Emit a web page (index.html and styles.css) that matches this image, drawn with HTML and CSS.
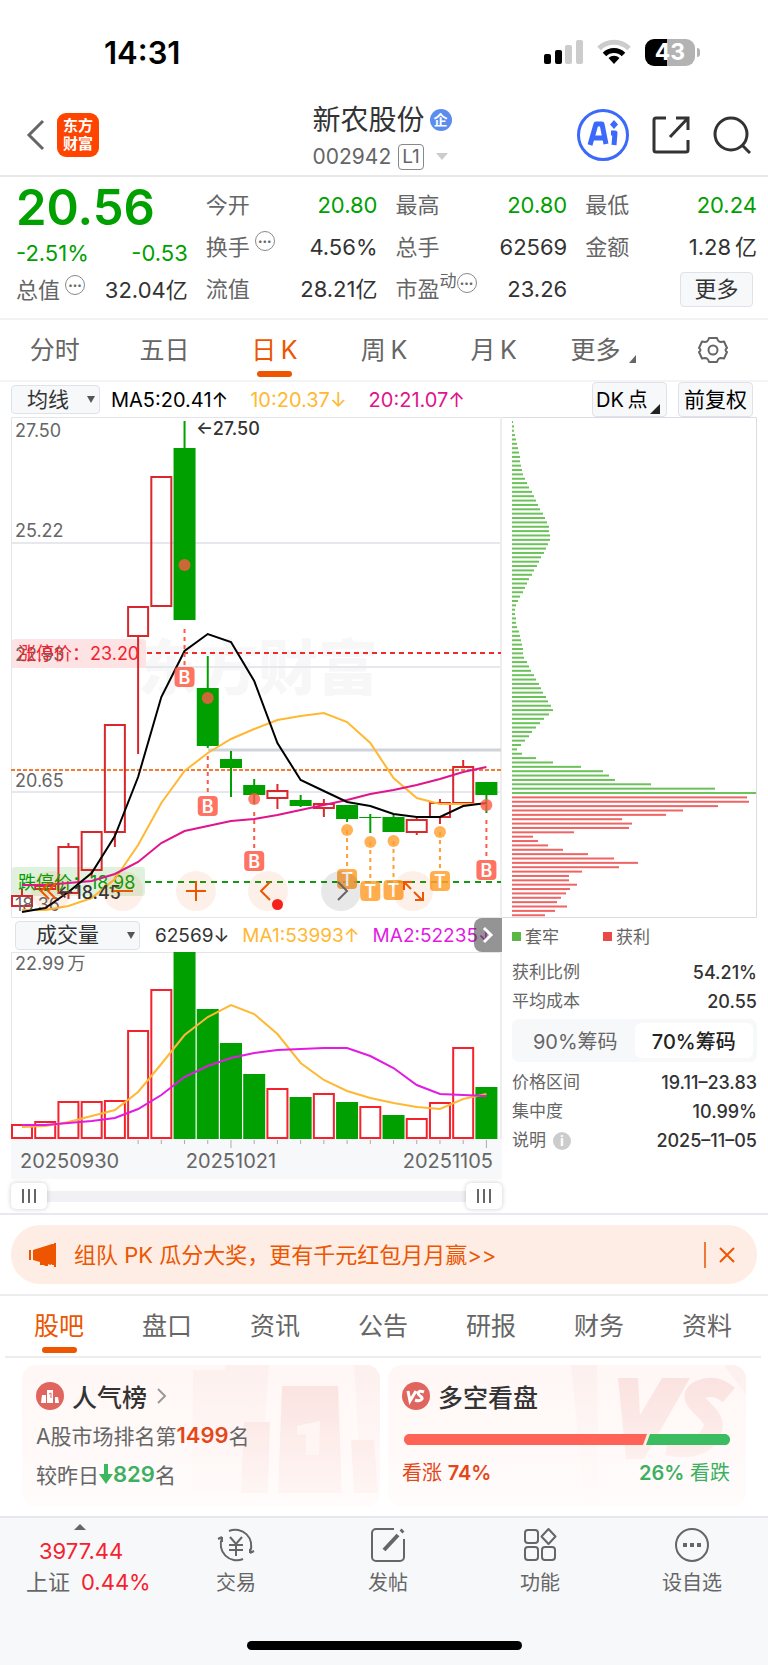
FILE: index.html
```html
<!DOCTYPE html>
<html lang="zh-CN">
<head>
    <meta charset="UTF-8">
    <meta name="viewport" content="width=device-width, initial-scale=1.0">
    <title>新农股份 002942</title>
    <link rel="stylesheet" href="styles.css">
</head>
<body>
    <!-- Status bar -->
    <div class="status-bar">
        <span class="time">14:31</span>
        <div class="status-icons">
            <svg width="39" height="26" viewBox="0 0 39 26">
                <rect x="0" y="15" width="7" height="10" rx="2"/>
                <rect x="11" y="11" width="7" height="14" rx="2"/>
                <rect x="21" y="6" width="7" height="19" rx="2" fill="#ccc"/>
                <rect x="32" y="1" width="7" height="24" rx="2" fill="#ccc"/>
            </svg>
            <svg width="34" height="26" viewBox="0 0 34 26" fill="none" stroke-width="5">
                <path d="M2 9.500A21 21 0 0 1 32 9.500" stroke="#ccc"/>
                <path d="M7.500 15.500A13.500 13.500 0 0 1 26.500 15.500" stroke="#000"/>
                <path d="M17 25l-5.500-6a8 8 0 0 1 11 0z" fill="#000"/>
            </svg>
            <div class="battery"><span>43</span></div>
        </div>
    </div>

    <!-- Title bar -->
    <header class="nav">
        <div class="nav-left">
            <button class="icon-btn" aria-label="返回">
                <svg width="20" height="32" viewBox="0 0 20 32" fill="none" stroke="#666" stroke-width="3"><path d="M17 2L3 16l14 14"/></svg>
            </button>
            <a class="logo" href="#">东方<br>财富</a>
        </div>
        <div class="nav-title">
            <h1>新农股份<span class="badge">企</span></h1>
            <p>002942<span class="level">L1</span><span class="caret"></span></p>
        </div>
        <div class="nav-right">
            <button class="icon-btn" aria-label="AI">
                <svg width="52" height="52" viewBox="0 0 52 52">
                    <circle cx="26" cy="26" r="24.500" fill="#fff" stroke="#3b69fa" stroke-width="3"/>
                    <path d="M13 36L19 15h6l4 20" fill="none" stroke="#3b69fa" stroke-width="5" stroke-linejoin="round"/>
                    <path d="M15 29h11" stroke="#3b69fa" stroke-width="5"/>
                    <path d="M34 24h4l-1 12" fill="none" stroke="#3b69fa" stroke-width="5" stroke-linejoin="round"/>
                    <path d="M37 11l4 4.500-4 4.500-4-4.500z" fill="#3b69fa"/>
                </svg>
            </button>
            <button class="icon-btn" aria-label="分享">
                <svg width="38" height="38" viewBox="0 0 38 38" fill="none" stroke="#333" stroke-width="3">
                    <path d="M14 2H4a2 2 0 0 0-2 2v30a2 2 0 0 0 2 2h30a2 2 0 0 0 2-2V24"/>
                    <path d="M24 2h12v12M36 2L18 21"/>
                </svg>
            </button>
            <button class="icon-btn" aria-label="搜索">
                <svg width="38" height="38" viewBox="0 0 38 38" fill="none" stroke="#333" stroke-width="3"><circle cx="18" cy="18" r="16"/><path d="M29 29l8 8"/></svg>
            </button>
        </div>
    </header>

    <!-- Quote summary -->
    <section class="quote">
        <div class="quote-col">
            <strong class="price">20.56</strong>
            <div class="pair down"><span>-2.51%</span><span>-0.53</span></div>
            <div class="pair"><span class="name">总值<i class="more-dot">•••</i></span><span>32.04亿</span></div>
        </div>
        <div class="quote-col">
            <div class="pair"><span class="name">今开</span><span class="down">20.80</span></div>
            <div class="pair"><span class="name">换手<i class="more-dot">•••</i></span><span>4.56%</span></div>
            <div class="pair"><span class="name">流值</span><span>28.21亿</span></div>
        </div>
        <div class="quote-col">
            <div class="pair"><span class="name">最高</span><span class="down">20.80</span></div>
            <div class="pair"><span class="name">总手</span><span>62569</span></div>
            <div class="pair"><span class="name">市盈<sup>动</sup><i class="more-dot">•••</i></span><span>23.26</span></div>
        </div>
        <div class="quote-col">
            <div class="pair"><span class="name">最低</span><span class="down">20.24</span></div>
            <div class="pair"><span class="name">金额</span><span>1.28&thinsp;亿</span></div>
            <div class="pair end"><button class="box-btn">更多</button></div>
        </div>
    </section>

    <!-- Period tabs -->
    <nav class="tabs period-tabs">
        <a href="#">分时</a>
        <a href="#">五日</a>
        <a href="#" class="active">日&thinsp;K</a>
        <a href="#">周&thinsp;K</a>
        <a href="#">月&thinsp;K</a>
        <a href="#">更多<i class="corner"></i></a>
        <button class="icon-btn" aria-label="设置">
            <svg width="30" height="28" viewBox="0 0 30 28" fill="none" stroke="#666" stroke-width="2">
                <path d="M11 2h8q1 4 4 4l3-.5 3 6.500q-3 2 0 4l-3 6.500-3-.5q-3 0-4 4h-8q-1-4-4-4l-3 .5L1 16q3-2 0-4l3-6.500L7 6q3 0 4-4z" stroke-linejoin="round"/>
                <circle cx="15" cy="14" r="4.500"/>
            </svg>
        </button>
    </nav>

    <!-- Indicator toolbar -->
    <div class="toolbar">
        <div class="select-box ma-select">
            <select aria-label="主图指标"><option>均线</option></select>
        </div>
        <span>MA5:20.41↑</span>
        <span class="c-orange">10:20.37↓</span>
        <span class="c-pink">20:21.07↑</span>
        <div class="toolbar-btns">
            <button class="box-btn dk">DK&thinsp;点<i class="corner"></i></button>
            <button class="box-btn">前复权</button>
        </div>
    </div>

    <main class="charts">
        <div class="left">
            <div class="k-chart">
                <svg id="kChart" viewBox="0 0 491 501"></svg>
                <div class="k-tools">
                    <button aria-label="后退"><svg viewBox="0 0 40 40"><path d="M18 12l-8 8 8 8M25 12l-8 8 8 8"/></svg></button>
                    <button aria-label="缩小"><svg viewBox="0 0 40 40"><path d="M10 20h20"/></svg></button>
                    <button aria-label="放大"><svg viewBox="0 0 40 40"><path d="M10 20h20M20 10v20"/></svg></button>
                    <button class="dot" aria-label="左移"><svg viewBox="0 0 40 40"><path d="M22 11l-9 9 9 9"/></svg></button>
                    <button class="grey" aria-label="右移"><svg viewBox="0 0 40 40"><path d="M17 11l9 9-9 9"/></svg></button>
                    <button aria-label="全屏"><svg viewBox="0 0 40 40"><path d="M11 19v-8h8M11 11l7 7M30 21v8h-8M29 29l-8-8"/></svg></button>
                </div>
            </div>
            <div class="vol-bar">
                <div class="select-box vol-select">
                    <select aria-label="副图指标"><option>成交量</option></select>
                </div>
                <span>62569↓</span>
                <span class="c-orange">MA1:53993↑</span>
                <span class="c-magenta">MA2:52235↓</span>
                <button class="expand" aria-label="展开"><svg width="12" height="18" viewBox="0 0 12 18"><path d="M2 2l7 7-7 7" fill="none" stroke="#fff" stroke-width="3"/></svg></button>
            </div>
            <svg id="volChart" viewBox="0 0 491 227"></svg>
            <div class="range">
                <input type="range" min="0" max="100" value="0" aria-label="起始">
                <input type="range" min="0" max="100" value="100" aria-label="结束">
            </div>
        </div>
        <div class="right">
            <svg id="chipChart" viewBox="0 0 255 501"></svg>
            <div class="chips">
                <div class="legend"><span><i class="sq green"></i>套牢</span><span><i class="sq red"></i>获利</span></div>
                <dl>
                    <div><dt>获利比例</dt><dd>54.21%</dd></div>
                    <div><dt>平均成本</dt><dd>20.55</dd></div>
                </dl>
                <div class="segment">
                    <button>90%筹码</button>
                    <button class="on">70%筹码</button>
                </div>
                <dl>
                    <div><dt>价格区间</dt><dd>19.11–23.83</dd></div>
                    <div><dt>集中度</dt><dd>10.99%</dd></div>
                    <div><dt>说明<i class="info">i</i></dt><dd>2025–11–05</dd></div>
                </dl>
            </div>
        </div>
    </main>

    <!-- Promo banner -->
    <div class="banner-wrap">
        <div class="banner">
            <svg width="28" height="24" viewBox="0 0 28 24" fill="#ed5500"><path d="M1 7h2v10H1zM5 7L24 1h2V0h2v24h-2v-2h-2v-1l-2 1-2-1v2h-3l-1-1h-4v-3L5 17z"/></svg>
            <a href="#">组队 PK 瓜分大奖，更有千元红包月月赢&gt;&gt;</a>
            <button class="icon-btn close" aria-label="关闭">
                <svg width="16" height="16" viewBox="0 0 16 16" fill="none" stroke="#ed5500" stroke-width="2"><path d="M1 1l14 14M15 1L1 15"/></svg>
            </button>
        </div>
    </div>

    <nav class="tabs info-tabs">
        <a href="#" class="active">股吧</a>
        <a href="#">盘口</a>
        <a href="#">资讯</a>
        <a href="#">公告</a>
        <a href="#">研报</a>
        <a href="#">财务</a>
        <a href="#">资料</a>
    </nav>

    <section class="cards">
        <article class="card">
            <svg class="card-bg" width="190" height="142" viewBox="0 0 190 142">
                <defs>
                    <linearGradient id="fade" x1="0" y1="0" x2="0" y2="142" gradientUnits="userSpaceOnUse">
                        <stop offset="0" stop-color="#fae0de"/>
                        <stop offset="1" stop-color="#fff8f6"/>
                    </linearGradient>
                    <linearGradient id="wash" x1="0" y1="0" x2="0" y2="142" gradientUnits="userSpaceOnUse">
                        <stop offset="0" stop-color="#fdf0ee"/>
                        <stop offset="1" stop-color="#fffcfb"/>
                    </linearGradient>
                </defs>
                <path d="M3 5h32V0h44l-4 57H54v72H2z" fill="url(#wash)"/>
                <path d="M164 0h26v142h-18z" fill="url(#wash)"/>
                <path d="M92 21h56l4 107H88zM54 57h26l-2 71H51zM161 75h23l4 53h-24z" fill="url(#fade)"/>
                <path d="M107 61l23-5-1 34h-13V69l-9 1z" fill="#fff6f4"/>
            </svg>
            <h2>
                <svg width="28" height="28" viewBox="0 0 28 28"><circle cx="14" cy="14" r="14" fill="#e0655f"/><path d="M6 13h4v8H5zM11 8h6v13h-6zM19 15h3l1 6h-4z" fill="#fff"/><path d="M13 12l2-1v5" fill="none" stroke="#e0605a"/></svg>
                人气榜
                <svg class="arrow" width="10" height="16" viewBox="0 0 10 16" fill="none" stroke="#999" stroke-width="2"><path d="M1 1l7 7-7 7"/></svg>
            </h2>
            <p>A股市场排名第<b class="up">1499</b>名</p>
            <p>较昨日<svg width="14" height="20" viewBox="0 0 14 20" fill="#3cb95f"><path d="M5 0h4v10h5l-7 10-7-10h5z"/></svg><b class="fall">829</b>名</p>
        </article>
        <article class="card">
            <svg class="card-bg" width="190" height="142" viewBox="0 0 190 142">
                <path d="M15 0h26l2 142H29zM168 0h22v30z" fill="url(#wash)"/>
                <path d="M62 13h20l2 37 22-37h28L88 94H70z" fill="url(#fade)"/>
                <path d="M173 30q-14-12-30-5c-18 10 18 22 14 38q-8 26-46 18" fill="none" stroke="url(#fade)" stroke-width="19"/>
            </svg>
            <h2>
                <svg width="28" height="28" viewBox="0 0 28 28"><circle cx="14" cy="14" r="14" fill="#e0655f"/><path d="M6 9l2 10 6-10M22 10q-5-2-6 1c0 3 5 3 4 6q-2 3-7 1" fill="none" stroke="#fff" stroke-width="3"/></svg>
                多空看盘
            </h2>
            <div class="vote-bar"><span class="bull" style="width:74%"></span><span class="bear"></span></div>
            <div class="vote-text"><span class="up">看涨 <b>74%</b></span><span class="fall"><b>26%</b> 看跌</span></div>
        </article>
    </section>

    <!-- Bottom bar -->
    <footer class="bottom">
        <div class="bottom-items">
            <a href="#" class="index">
                <i class="tri-up"></i>
                <span class="red-text value">3977.44</span>
                <span>上证&ensp;<span class="red-text">0.44%</span></span>
            </a>
            <a href="#">
                <svg width="40" height="36" viewBox="0 0 40 36" fill="none" stroke="#666" stroke-width="2"><path d="M13 4a16 16 0 0 1 21 21M27 32A16 16 0 0 1 6 11M34 26l4-2M34 26v-4M6 10l-4 2M6 10v5M14 10l6 7 6-7M20 17v12M13 18h14M13 23h14"/></svg>
                交易
            </a>
            <a href="#">
                <svg width="36" height="36" viewBox="0 0 36 36" fill="none" stroke="#666" stroke-width="2"><path d="M24 2H6a4 4 0 0 0-4 4v24a4 4 0 0 0 4 4h24a4 4 0 0 0 4-4V12"/><path d="M14 23L28 8M31 5l2-2" stroke-width="4"/></svg>
                发帖
            </a>
            <a href="#">
                <svg width="36" height="36" viewBox="0 0 36 36" fill="none" stroke="#666" stroke-width="2"><rect x="3" y="3" width="13" height="13" rx="3"/><rect x="3" y="20" width="13" height="13" rx="3"/><rect x="20" y="20" width="13" height="13" rx="3"/><path d="M26.500 2l7 7.500-7 7.500-7-7.500z" stroke-linejoin="round"/></svg>
                功能
            </a>
            <a href="#">
                <svg width="36" height="36" viewBox="0 0 36 36" fill="none" stroke="#666" stroke-width="2"><circle cx="18" cy="18" r="16"/><path d="M9 18h4M16 18h4M23 18h4" stroke-width="4"/></svg>
                设自选
            </a>
        </div>
        <div class="home-line"></div>
    </footer>

    <script src="charts.js"></script>
</body>
</html>
```
FILE: styles.css
```css
body {
    margin: 0;
    background-color: #fff;
    color: #333;
    font-family: Inter, "Noto Sans CJK SC", sans-serif;
    font-size: 22px;
}

h1, h2, p, dl, dd {
    margin: 0;
    font-weight: normal;
}

a {
    color: inherit;
    text-decoration: none;
}

i {
    font-style: normal;
}

svg {
    display: block;
    flex: none;
}

button, select, input {
    margin: 0;
    font-family: inherit;
    color: inherit;
}

.icon-btn {
    padding: 0;
    border: none;
    background: none;
}

.down { color: #00a000; }
.up { color: #e5471b; }
.fall { color: #3cb060; }
.red-text { color: #f5222d; }
.c-orange { color: #ffb833; }
.c-pink { color: #e0148c; }
.c-magenta { color: #e11be1; }

/* Status bar */
.status-bar {
    display: flex;
    justify-content: space-between;
    align-items: center;
    height: 52px;
    padding: 26px 68px 16px 104px;
}

.time {
    color: #000;
    font-size: 31px;
    font-weight: 600;
}

.status-icons {
    display: flex;
    align-items: center;
    gap: 14px;
}

.battery {
    position: relative;
    width: 50px;
    height: 27px;
    margin-right: 5px;
    border-radius: 9px;
    background: linear-gradient(to right, #000 43%, #b3b3b3 43%);
    color: #fff;
    font-size: 23px;
    font-weight: 700;
    line-height: 27px;
    text-align: center;
}

.battery::after {
    content: "";
    position: absolute;
    top: 9px;
    right: -5px;
    width: 3px;
    height: 9px;
    border-radius: 0 4px 4px 0;
    background: #b3b3b3;
}

/* Title bar */
.nav {
    display: grid;
    grid-template-columns: 1fr auto 1fr;
    align-items: center;
    height: 81px;
    padding: 0 17px 0 13px;
    border-bottom: 2px solid #e8e8e8;
}

.nav-left, .nav-right {
    display: flex;
    align-items: center;
}

.nav-left {
    gap: 11px;
    padding-left: 13px;
}

.nav-right {
    justify-content: flex-end;
    gap: 23px;
}

.logo {
    padding: 4px 6px;
    border-radius: 9px;
    background: #ff4400;
    color: #fff;
    font-size: 15px;
    font-weight: 700;
    line-height: 18px;
}

.nav-title { padding-top: 6px; }

.nav-title h1 {
    display: flex;
    align-items: center;
    gap: 5px;
    font-size: 28px;
    line-height: 38px;
}

.badge {
    width: 22px;
    height: 22px;
    border-radius: 50%;
    background: #5b8def;
    color: #fff;
    font-size: 14px;
    font-weight: 700;
    line-height: 21px;
    text-align: center;
}

.nav-title p {
    display: flex;
    align-items: center;
    color: #666;
    font-size: 21px;
    line-height: 36px;
}

.level {
    margin: 0 12px 0 7px;
    padding: 0 3px;
    border: 1px solid #888;
    border-radius: 4px;
    font-size: 19px;
    line-height: 24px;
}

.caret {
    border: 6px solid transparent;
    border-top: 7px solid #ccc;
    border-bottom: none;
}

/* Quote summary */
.quote {
    display: grid;
    grid-template-columns: repeat(4, 1fr);
    gap: 18px;
    padding: 7px 11px 8px 16px;
    border-bottom: 2px solid #f2f2f2;
}

.quote-col {
    display: flex;
    flex-direction: column;
}

.pair {
    display: flex;
    justify-content: space-between;
    height: 42px;
    line-height: 42px;
    white-space: nowrap;
}

.pair.end {
    justify-content: flex-end;
    align-items: center;
    padding-right: 4px;
}

.price {
    height: 49px;
    color: #00a000;
    font-size: 49px;
    font-weight: 600;
    line-height: 48px;
}

.price ~ .pair {
    height: 37px;
    line-height: 40px;
}

.name {
    display: flex;
    color: #666;
}

.name sup {
    margin-top: -8px;
    font-size: 17px;
    line-height: 42px;
    vertical-align: top;
}

.more-dot {
    width: 18px;
    height: 18px;
    margin: 5px 0 0 5px;
    border: 1px solid #888;
    border-radius: 50%;
    font-size: 8px;
    line-height: 18px;
    text-align: center;
}

.name sup + .more-dot { margin-left: 0; }

.box-btn {
    height: 35px;
    padding: 0 5px;
    border: 1px solid #dfe2e8;
    border-radius: 4px;
    background: #f7f8fa;
    font-size: 21px;
    line-height: 32px;
    white-space: nowrap;
}

.pair .box-btn {
    width: 73px;
    font-size: 22px;
}

/* Tabs */
.tabs {
    display: flex;
    color: #666;
    font-size: 25px;
}

.tabs a, .tabs button {
    flex: 1;
    display: flex;
    justify-content: center;
    position: relative;
    line-height: 60px;
}

.tabs .icon-btn { align-self: center; }

.tabs .active { color: #ed5500; }

.tabs .active::after {
    content: "";
    position: absolute;
    bottom: 3px;
    left: calc(50% - 17px);
    width: 35px;
    height: 6px;
    border-radius: 3px;
    background: #ed5500;
}

.period-tabs {
    border-bottom: 2px solid #f4f4f4;
}

.corner {
    align-self: flex-end;
    margin: 0 0 17px 9px;
    border-left: 7px solid transparent;
    border-bottom: 8px solid #666;
}

/* Indicator toolbar */
.toolbar {
    display: flex;
    align-items: center;
    gap: 22px;
    height: 35px;
    padding: 0 15px 0 11px;
    color: #000;
    font-size: 20px;
}

.toolbar-btns {
    display: flex;
    gap: 11px;
    margin-left: auto;
}

.toolbar .box-btn {
    width: 75px;
    font-size: 21px;
}

.toolbar .dk {
    display: flex;
    align-items: center;
    padding: 0 3px;
    font-size: 20px;
}

.dk .corner {
    margin: 0 0 2px 2px;
    border-left-width: 10px;
    border-bottom: 10px solid #222;
}

.select-box {
    position: relative;
}

.select-box select {
    width: 100%;
    height: 29px;
    border: 1px solid #dfe2e8;
    border-radius: 4px;
    background: #f7f8fa;
    color: #333;
    font-size: 21px;
    line-height: 26px;
    appearance: none;
}

.select-box::after {
    content: "";
    position: absolute;
    top: 11px;
    right: 5px;
    border: 4px solid transparent;
    border-top: 7px solid #555;
    border-bottom: none;
    pointer-events: none;
}

.ma-select {
    width: 89px;
    margin-right: -11px;
}

.ma-select select { padding: 0 0 0 15px; }

/* Charts */
.charts {
    display: grid;
    grid-template-columns: 491fr 255fr;
    margin: 0 11px;
}

#kChart, #volChart, #chipChart {
    width: 100%;
    height: auto;
}

#kChart text, #volChart text {
    font-size: 18px;
    fill: #666;
}

.k-chart {
    position: relative;
}

.k-tools {
    position: absolute;
    bottom: 7px;
    left: 20px;
    right: 69px;
    display: flex;
    justify-content: space-between;
}

.k-tools button {
    position: relative;
    width: 40px;
    height: 40px;
    padding: 0;
    border: none;
    border-radius: 50%;
    background: rgba(237, 85, 0, .09);
}

.k-tools svg {
    fill: none;
    stroke: #ed5500;
    stroke-width: 2;
}

.k-tools .grey { background: rgba(0, 0, 0, .09); }

.k-tools .grey svg { stroke: #666; }

.k-tools .dot::after {
    content: "";
    position: absolute;
    right: 5px;
    bottom: 1px;
    width: 11px;
    height: 11px;
    border-radius: 50%;
    background: #f5221c;
}

.vol-bar {
    display: flex;
    position: relative;
    align-items: center;
    gap: 13px;
    height: 34px;
    padding-left: 4px;
    color: #333;
    font-size: 19px;
    white-space: nowrap;
    overflow: hidden;
}

.vol-select {
    flex: none;
    width: 125px;
    margin-right: 2px;
}

.vol-select select { padding: 0 0 0 20px; }

.expand {
    display: flex;
    align-items: center;
    justify-content: center;
    position: absolute;
    top: 0;
    right: 0;
    width: 28px;
    height: 34px;
    padding: 0;
    border: none;
    border-radius: 8px 0 0 8px;
    background: rgba(60, 60, 60, .55);
}

/* Two thumbs share one track */
.range {
    display: grid;
    align-items: center;
    height: 34px;
    background: linear-gradient(#f1f1f4, #f1f1f4) center / 100% 11px no-repeat;
}

.range input {
    grid-area: 1 / 1;
    width: 100%;
    background: none;
    appearance: none;
    pointer-events: none;
}

.range input::-webkit-slider-thumb {
    appearance: none;
    width: 36px;
    height: 26px;
    border-radius: 5px;
    background: repeating-linear-gradient(to right, #666 0 2px, #fff 2px 6px) center / 14px 14px no-repeat, #fff;
    box-shadow: 0 0 5px rgba(0, 0, 0, .2);
    pointer-events: auto;
}

/* Chip distribution */
.chips {
    padding: 3px 0 0 10px;
    color: #666;
    font-size: 17px;
}

.legend {
    display: grid;
    grid-template-columns: 91px 1fr;
    line-height: 32px;
    margin-bottom: 5px;
}

.sq {
    display: inline-block;
    width: 9px;
    height: 9px;
    margin-right: 4px;
    vertical-align: 2px;
}

.sq.green { background: #5bb846; }
.sq.red { background: #eb4848; }

.chips dl div {
    display: flex;
    justify-content: space-between;
    line-height: 29px;
}

.chips dd {
    color: #333;
    font-size: 18px;
    font-weight: 500;
}

.segment {
    display: grid;
    grid-template-columns: 1fr 1fr;
    margin: 3px 0 6px;
    padding: 4px;
    border-radius: 7px;
    background: #f7f8fa;
}

.segment button {
    height: 35px;
    padding: 0;
    border: none;
    border-radius: 6px;
    background: none;
    font-size: 20px;
}

.segment .on {
    background: #fff;
    color: #222;
    font-weight: 500;
}

.info {
    display: inline-block;
    width: 18px;
    height: 18px;
    margin-left: 7px;
    border-radius: 50%;
    background: #ccc;
    color: #fff;
    font-size: 14px;
    font-weight: 700;
    line-height: 18px;
    text-align: center;
}

/* Promo banner */
.banner-wrap {
    padding: 10px 11px;
    border-top: 2px solid #e8e9ee;
    border-bottom: 2px solid #ededed;
}

.banner {
    display: flex;
    align-items: center;
    gap: 18px;
    height: 59px;
    padding: 0 22px 0 17px;
    border-radius: 29px;
    background: #feede4;
    color: #ed5500;
}

.banner a { padding-bottom: 3px; }

.close {
    margin-left: auto;
    padding: 5px 0 5px 13px;
    border-left: 2px solid #ed7a3b;
}

.info-tabs {
    margin: 0 7px 0 5px;
    border-bottom: 2px solid #ececec;
}

/* Cards */
.cards {
    display: grid;
    grid-template-columns: 1fr 1fr;
    gap: 8px;
    padding: 7px 22px 9px;
}

.card {
    position: relative;
    height: 130px;
    padding: 12px 16px 0 14px;
    border-radius: 14px;
    background: linear-gradient(#fff7f5, #fffcfb);
    overflow: hidden;
}

.card > * { position: relative; }

.card .card-bg {
    position: absolute;
    top: 0;
    right: 0;
}

.card h2 {
    display: flex;
    align-items: center;
    gap: 8px;
    height: 38px;
    font-size: 25px;
    font-weight: 500;
}

.card p {
    display: flex;
    align-items: center;
    height: 38px;
    padding-top: 1px;
    color: #666;
    font-size: 21px;
}

.card b { font-weight: 600; }

.card p b { font-size: 22px; }

.arrow { margin-left: 2px; }

.vote-bar {
    display: flex;
    gap: 3px;
    height: 11px;
    margin: 19px 0 0 2px;
    border-radius: 6px;
    overflow: hidden;
}

.bull, .bear { transform: skewX(-20deg); }

.bull {
    background: #ff6257;
    box-shadow: -6px 0 #ff6257;
}

.bear {
    flex: 1;
    background: #3cbc60;
    box-shadow: 6px 0 #3cbc60;
}

.vote-text {
    display: flex;
    justify-content: space-between;
    margin-top: 13px;
    font-size: 20px;
    line-height: 30px;
}

/* Bottom bar */
.bottom {
    padding-bottom: 15px;
    border-top: 2px solid #e5e7ea;
    background: #f7f8fa;
}

.bottom-items {
    display: grid;
    grid-template-columns: 160fr 152fr 152fr 152fr 152fr;
    height: 123px;
}

.bottom-items a {
    display: flex;
    flex-direction: column;
    align-items: center;
    gap: 6px;
    padding-top: 9px;
    color: #666;
    font-size: 20px;
    line-height: 28px;
}

.bottom-items .index {
    align-items: flex-start;
    gap: 3px;
    padding: 6px 0 0 26px;
    font-size: 22px;
    white-space: nowrap;
}

.index .value { padding-left: 13px; }

.tri-up {
    margin: 0 0 4px 48px;
    border: 6px solid transparent;
    border-top: none;
    border-bottom: 6px solid #666;
}

.home-line {
    width: 275px;
    height: 9px;
    margin: 0 auto;
    border-radius: 5px;
    background: #000;
}
```
FILE: charts.js
```javascript
const GREEN = '#00a000';
const RED = '#d9282d';

// x of the candle with index i
const cx = i => 11 + i * 23.22;

// [direction, high, body top, body bottom, low]
const candles = [
    ['up', 472, 479, 490, 490], ['up', 469, 469, 473, 473], ['up', 426, 430, 477, 482],
    ['up', 415, 415, 454, 460], ['up', 308, 308, 416, 430], ['up', 190, 190, 220, 337],
    ['up', 60, 60, 190, 190], ['down', 4, 31, 203, 203], ['down', 239, 271, 329, 331],
    ['down', 334, 342, 351, 380], ['down', 362, 368, 378, 387], ['up', 367, 374, 382, 392],
    ['down', 378, 383, 389, 390], ['up', 382, 387, 392, 400], ['down', 388, 388, 402, 405],
    ['down', 397, 400, 401, 416], ['down', 398, 400, 415, 415], ['up', 401, 403, 416, 418],
    ['up', 382, 386, 401, 407], ['up', 343, 350, 387, 387], ['down', 365, 365, 378, 396]
];

const ma5 = [495, 491, 475, 456, 419, 360, 280, 234, 217, 225, 264, 326, 363, 374, 385, 389, 397, 400, 400, 389, 386];
const ma10 = [493, 493, 489, 481, 462, 428, 386, 354, 336, 322, 312, 303, 299, 296, 305, 326, 361, 381, 387, 387, 387];
const ma20 = [468, 468, 466, 464, 457, 445, 426, 414, 409, 404, 402, 398, 393, 388, 383, 377, 373, 368, 362, 355, 350];

// [candle index, letter, dot y, box y, dashed line start]
const marks = [
    [7, 'B', 148, 260, 212], [8, 'B', 281, 389, 339], [10, 'B', 382, 444, 395], [20, 'B', 388, 453, 403],
    [14, 'T', 413, 462, 413], [15, 'T', 425, 474, 425], [16, 'T', 424, 473, 424], [18, 'T', 415, 464, 415]
];

const volumes = [173, 170, 150, 150, 149, 79, 38, 0, 57, 91, 122, 137, 145, 142, 150, 155, 163, 167, 151, 96, 135];
const volDown = [7, 8, 9, 10, 12, 14, 16, 20];
const volMa1 = [175, 174, 170, 164, 158, 140, 112, 83, 65, 53, 62, 82, 111, 128, 139, 146, 151, 155, 157, 147, 142];
const volMa2 = [173, 173, 171, 169, 166, 157, 143, 125, 114, 106, 101, 98, 97, 96, 96, 104, 116, 133, 142, 143, 144];

const trapped = [
    1, 2, 2, 3, 4, 5, 6, 7, 8, 8, 9, 10, 11, 13, 15, 17, 20, 22, 24, 26, 28, 31, 33, 35, 37, 37, 38, 38, 36, 34,
    32, 29, 27, 25, 22, 20, 17, 15, 13, 11, 8, 6, 4, 3, 3, 4, 4, 5, 7, 8, 9, 10, 11, 11, 12, 15, 17, 19, 22, 24,
    27, 29, 31, 34, 36, 39, 41, 37, 32, 28, 24, 20, 17, 13, 9, 5, 10, 24, 41, 69, 91, 97, 103, 139, 203, 244
];
const profit = [
    235, 237, 206, 171, 154, 110, 120, 117, 62, 21, 26, 36, 51, 76, 102, 126, 107, 70, 57, 57, 65, 58, 54, 49,
    45, 55, 43, 33
];

function line(x1, y1, x2, y2, color, width = 1, dash = '') {
    return `<line x1="${x1}" y1="${y1}" x2="${x2}" y2="${y2}" stroke="${color}" stroke-width="${width}" stroke-dasharray="${dash}"/>`;
}

function rect(x, y, w, h, fill, extra = '') {
    return `<rect x="${x}" y="${y}" width="${w}" height="${h}" fill="${fill}" ${extra}/>`;
}

function text(x, y, str, style = '') {
    return `<text x="${x}" y="${y}" style="${style}">${str}</text>`;
}

function curve(values, color) {
    const points = values.map((y, i) => `${cx(i)},${y}`).join(' ');
    return `<polyline points="${points}" fill="none" stroke="${color}" stroke-width="2"/>`;
}

function drawK() {
    let s = '';
    s += text(127, 273, '东方财富', 'font-size:60px;font-weight:900;fill:#f7f7f8');
    [126, 250, 375].forEach(y => { s += line(0, y, 490, y, '#e6e8ee', 2); });
    s += `<path d="M490 .5H.5V500.500H491" fill="none" stroke="#e3e5ea"/>` + line(490, 0, 490, 501, '#eeeeee', 2);
    s += line(197, 333, 490, 333, '#d0d4da', 3);
    s += line(0, 353, 490, 353, '#f57a32', 2, '4 2');

    // Limit up / limit down bands
    s += rect(1, 222, 134, 29, '#fde3e3', 'rx="3"') + rect(1, 450, 133, 29, '#e0f2de', 'rx="3"');
    s += line(136, 236, 490, 236, '#f02a2a', 2, '5 4') + line(134, 465, 490, 465, '#109a10', 2, '6 5');

    candles.forEach(([dir, high, top, bottom, low], i) => {
        const x = cx(i);
        const color = dir === 'up' ? RED : GREEN;
        s += line(x, high, x, top, color, 2) + line(x, bottom, x, low, color, 2);
        s += dir === 'up'
            ? rect(x - 10, top, 20, Math.max(bottom - top - 1, 2), 'none', `stroke="${RED}" stroke-width="2"`)
            : rect(x - 11, top, 22, bottom - top, GREEN);
    });

    s += text(4, 20, '27.50') + text(4, 120, '25.22') + text(4, 244, '22.93') + text(4, 370, '20.65') + text(4, 494, '18.36');
    s += text(7, 243, '涨停价：23.20', 'fill:#f5222d') + text(7, 472, '跌停价：18.98', `fill:${GREEN}`);

    s += curve(ma10, '#ffb833') + curve(ma20, '#e0148c') + curve(ma5, '#000');

    marks.forEach(([i, letter, dotY, boxY, from]) => {
        const x = cx(i);
        const color = letter === 'B' ? '#ff5a46' : '#ff9f2e';
        s += line(x, from, x, boxY - 10, color, 2, '4 4');
        s += `<circle cx="${x}" cy="${dotY}" r="6" fill="${color}" opacity=".8"/>`;
        s += rect(x - 10, boxY - 10, 20, 20, color, 'rx="4" opacity=".85"');
        s += text(x, boxY + 7, letter, 'fill:#fff;font-weight:600;text-anchor:middle');
    });

    s += text(185, 18, '←27.50', 'fill:#333;font-weight:500') + text(46, 482, '←18.45', 'fill:#333;font-weight:500');
    document.getElementById('kChart').innerHTML = s;
}

function drawVolume() {
    let s = rect(0, 187, 491, 40, '#f7f8fa');
    s += '<path d="M490 .5H.5V187" fill="none" stroke="#e3e5ea"/>' + line(490, 0, 490, 187, '#eeeeee', 2);
    volumes.forEach((top, i) => {
        const x = cx(i);
        s += volDown.includes(i)
            ? rect(x - 11, top, 22, 187 - top, GREEN)
            : rect(x - 10, top, 20, 186 - top, '#fff', 'stroke="#f5222d" stroke-width="2"');
        if (i > 4) {
            s += line(x, 188, x, i === 9 || i === 20 ? 196 : 192, '#aaa');
        }
    });
    s += curve(volMa1, '#ffb833') + curve(volMa2, '#e11be1');
    s += text(4, 18, '22.99&#8201;万');
    s += text(9, 216, '20250930', 'font-size:20px');
    s += text(220, 216, '20251021', 'font-size:20px;text-anchor:middle');
    s += text(482, 216, '20251105', 'font-size:20px;text-anchor:end');
    document.getElementById('volChart').innerHTML = s;
}

function drawChips() {
    let s = '<path d="M0 .5H254.500V500.500H0" fill="none" stroke="#d9dce3"/>';
    trapped.concat(profit).forEach((w, i) => {
        s += rect(10, 4 + i * 4.365, w, 2, i < trapped.length ? '#6cc25a' : '#ef6464');
    });
    document.getElementById('chipChart').innerHTML = s;
}

drawK();
drawVolume();
drawChips();
```
